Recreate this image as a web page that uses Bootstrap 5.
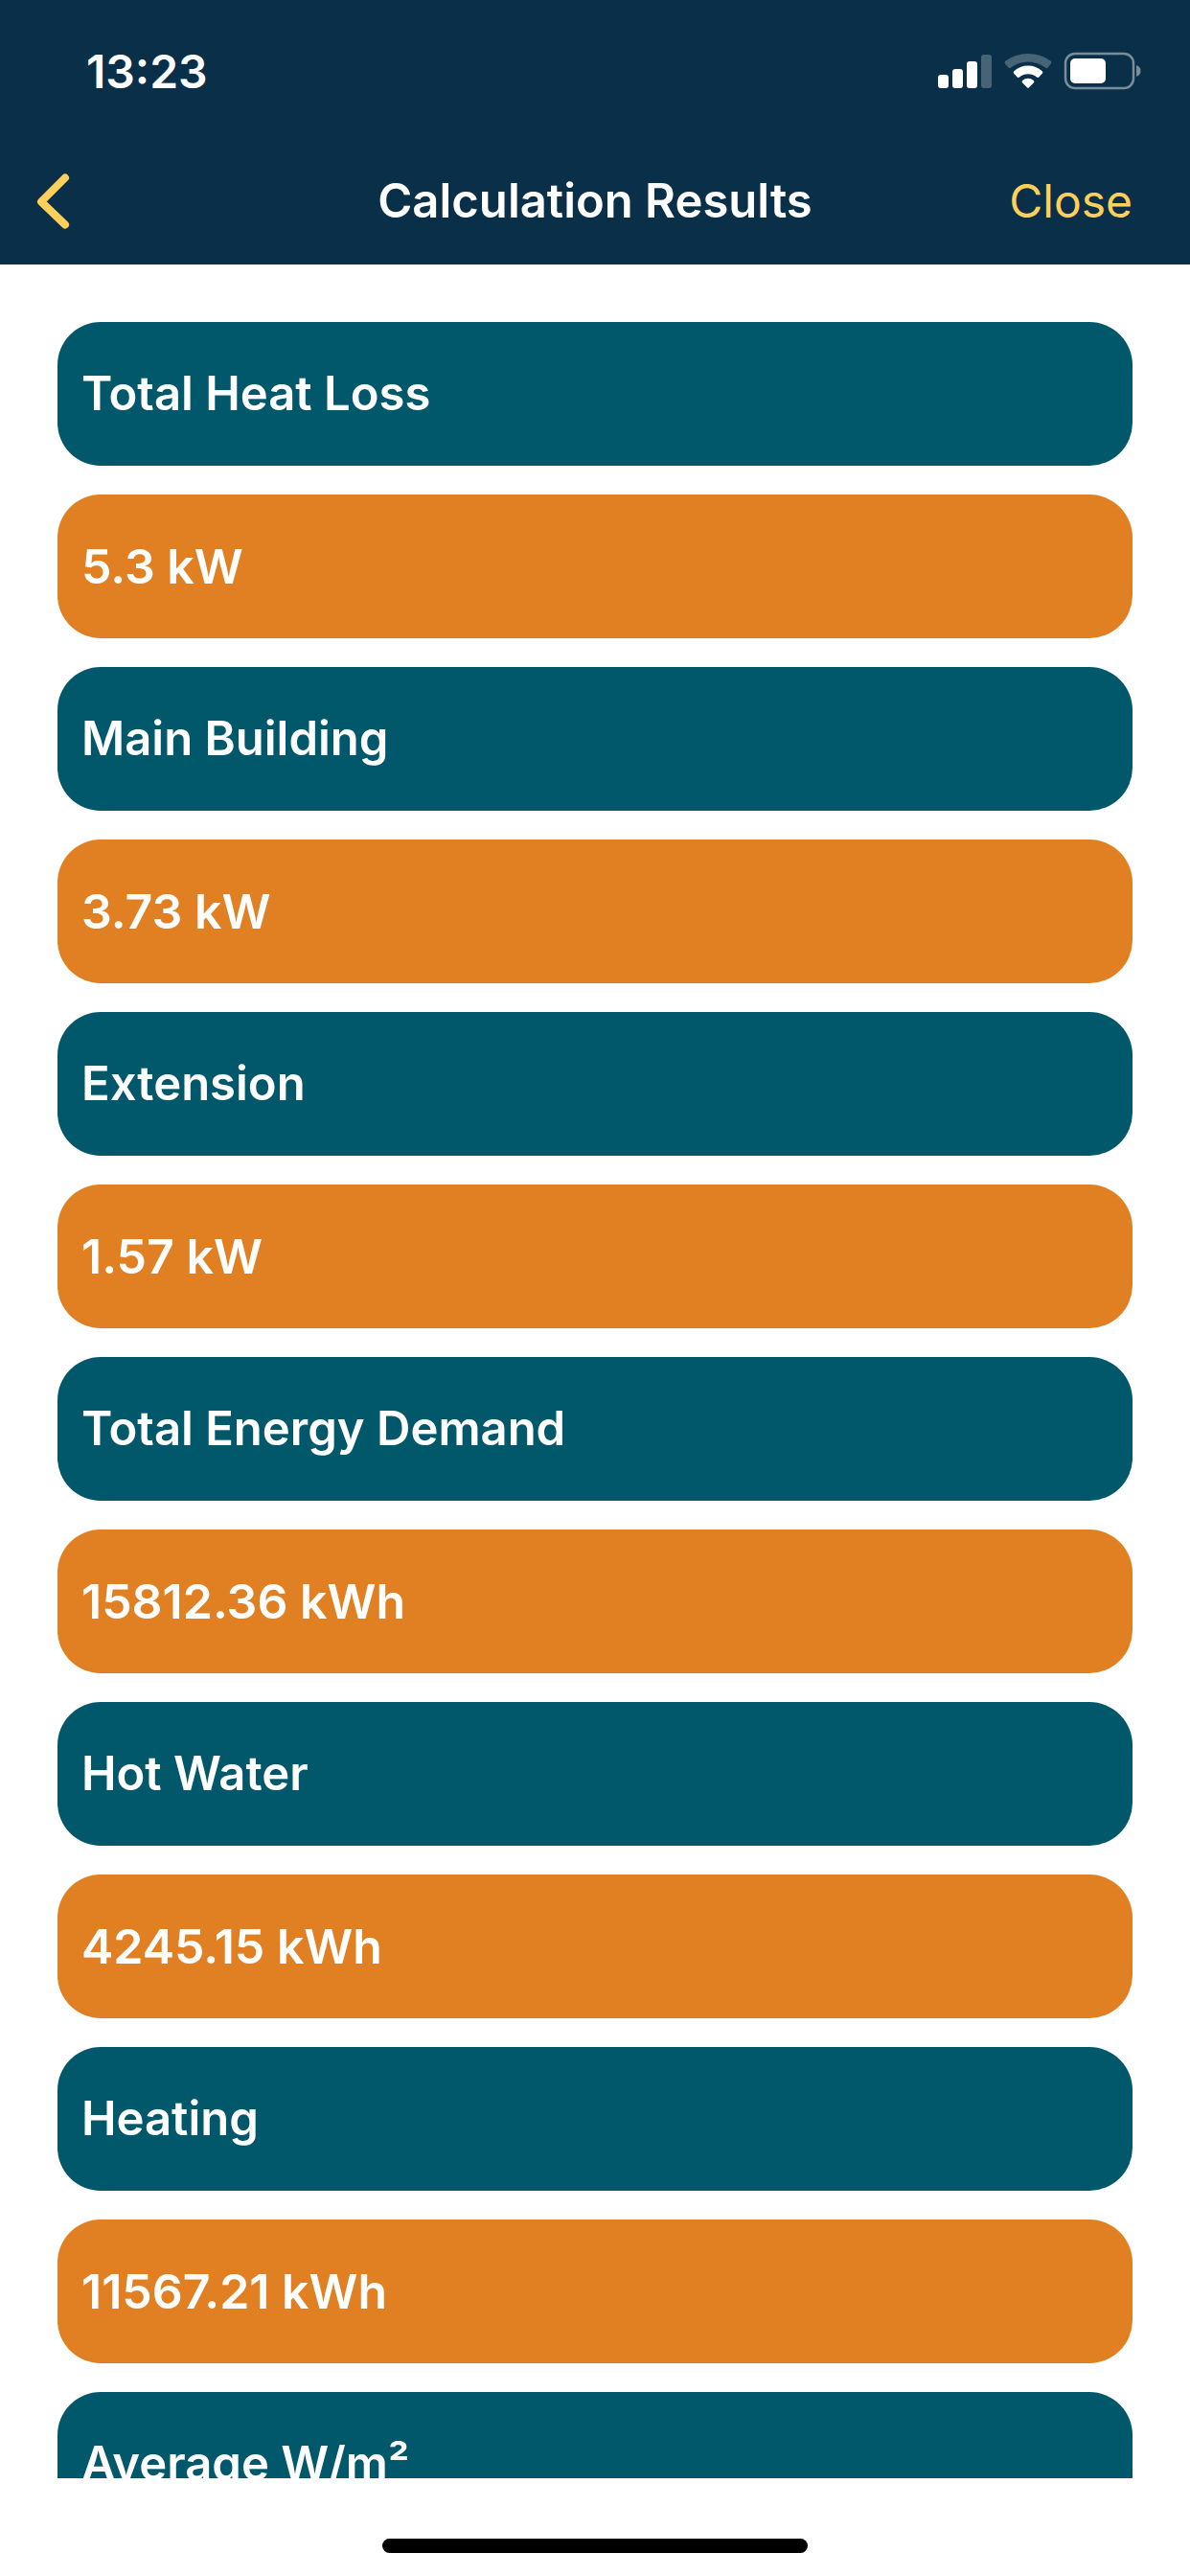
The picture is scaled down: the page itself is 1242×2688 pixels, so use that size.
<!DOCTYPE html>
<html lang="en">
<head>
<meta charset="utf-8">
<meta name="viewport" content="width=device-width, initial-scale=1">
<title>Calculation Results</title>
<link href="https://cdn.jsdelivr.net/npm/bootstrap@5.3.0/dist/css/bootstrap.min.css" rel="stylesheet">
<style>
  body { font-family: Inter, "Liberation Sans", sans-serif; font-size: 49px; line-height: 60px; }
  .app-head { background: #0a2f48; padding-bottom: 30px; }
  .status-row { height: 150px; padding: 0 48px 0 90px; }
  .clock { font-size: 48px; font-weight: 600; }
  .title-row { height: 96px; display: grid; grid-template-columns: 1fr auto 1fr; padding: 24px 36px 0; }
  .title-row h1 { font-size: 49px; line-height: 60px; font-weight: 600; }
  .title-row .btn { border: 0; line-height: 60px; color: #ffcf5c; }
  .title-row .close-btn { font-size: 48px; margin-right: 24px; }
  .results { overflow-y: auto; scrollbar-width: none; padding: 60px 60px 0; }
  .results::-webkit-scrollbar { display: none; }
  .result-list { gap: 30px; }
  .pill { height: 150px; padding: 0 25px; border-radius: 45px; color: #fff; font-weight: 600; }
  .pill-name { background: #00586a; }
  .pill-value { background: #e08022; font-size: 50px; }
  .home-area { height: 102px; padding-top: 63px; }
  .home-bar { width: 444px; height: 15px; background: #000; }
</style>
</head>
<body class="vh-100 d-flex flex-column bg-white overflow-hidden">
<header class="app-head flex-shrink-0 text-white">
  <div class="status-row d-flex align-items-center justify-content-between">
    <span class="clock">13:23</span>
    <svg width="216" height="42" viewBox="0 0 216 42" role="img" aria-label="Signal, Wi-Fi and battery">
      <g fill="#fff">
        <rect x="1" y="24" width="11" height="14" rx="3"/>
        <rect x="16" y="18" width="11" height="20" rx="3"/>
        <rect x="31" y="10" width="11" height="28" rx="3"/>
        <rect x="46" y="3" width="11" height="35" rx="3" opacity=".25"/>
        <path opacity=".25" d="M71 12.500Q69.800 11 71.500 9.600Q81.500 2 95 2T118.500 9.600Q120.200 11 119 12.500L115.600 16.500Q114.500 17.700 113 16.500Q105 10.500 95 10.500T77 16.500Q75.500 17.700 74.400 16.500Z"/>
        <path d="M80 22.500Q79.300 21.300 80.300 20.300Q86.500 14.500 95 14.500T109.700 20.300Q110.700 21.300 110 22.500L106.300 26.600Q105.300 27.500 104 26.600Q100 23.300 95 23.300T86 26.600Q84.700 27.500 83.700 26.600Z"/>
        <path d="M88.800 32Q88.200 31 89.200 30Q91.600 27.700 95 27.700T100.800 30Q101.800 31 101.200 32L95.800 37.600Q95 38.300 94.200 37.600Z"/>
        <rect x="139" y="7" width="37" height="26" rx="5"/>
        <path opacity=".45" d="M208 14Q212.500 15.500 212.500 20T208 26Z"/>
      </g>
      <rect x="134" y="2" width="71" height="36" rx="10" fill="none" stroke="#fff" stroke-width="2.500" opacity=".45"/>
    </svg>
  </div>
  <div class="title-row align-items-center">
    <button type="button" class="btn p-0 d-flex" aria-label="Back">
      <svg width="40" height="60" viewBox="0 0 40 60" fill="none" stroke="#ffcf5c" stroke-width="8" stroke-linecap="round" stroke-linejoin="round"><path d="M32 5.500L7 30.500L32 54.500"/></svg>
    </button>
    <h1 class="m-0">Calculation Results</h1>
    <button type="button" class="btn close-btn p-0 text-end">Close</button>
  </div>
</header>
<main class="results flex-grow-1">
  <dl class="result-list d-flex flex-column m-0">
    <dt class="pill pill-name flex-shrink-0 d-flex align-items-center">Total Heat Loss</dt>
    <dd class="pill pill-value flex-shrink-0 d-flex align-items-center m-0">5.3 kW</dd>
    <dt class="pill pill-name flex-shrink-0 d-flex align-items-center">Main Building</dt>
    <dd class="pill pill-value flex-shrink-0 d-flex align-items-center m-0">3.73 kW</dd>
    <dt class="pill pill-name flex-shrink-0 d-flex align-items-center">Extension</dt>
    <dd class="pill pill-value flex-shrink-0 d-flex align-items-center m-0">1.57 kW</dd>
    <dt class="pill pill-name flex-shrink-0 d-flex align-items-center">Total Energy Demand</dt>
    <dd class="pill pill-value flex-shrink-0 d-flex align-items-center m-0">15812.36 kWh</dd>
    <dt class="pill pill-name flex-shrink-0 d-flex align-items-center">Hot Water</dt>
    <dd class="pill pill-value flex-shrink-0 d-flex align-items-center m-0">4245.15 kWh</dd>
    <dt class="pill pill-name flex-shrink-0 d-flex align-items-center">Heating</dt>
    <dd class="pill pill-value flex-shrink-0 d-flex align-items-center m-0">11567.21 kWh</dd>
    <dt class="pill pill-name flex-shrink-0 d-flex align-items-center">Average W/m²</dt>
  </dl>
</main>
<footer class="home-area flex-shrink-0 d-flex justify-content-center">
  <div class="home-bar rounded-pill"></div>
</footer>
<script src="https://cdn.jsdelivr.net/npm/bootstrap@5.3.0/dist/js/bootstrap.bundle.min.js"></script>
</body>
</html>
